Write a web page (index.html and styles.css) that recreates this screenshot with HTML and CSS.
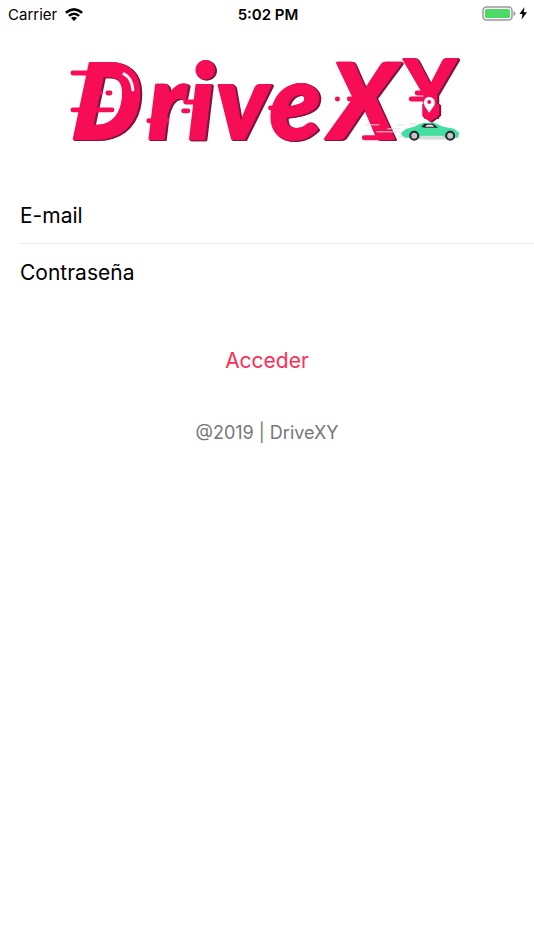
FILE: index.html
```html
<!DOCTYPE html>
<html lang="es">
<head>
<meta charset="utf-8">
<meta name="viewport" content="width=device-width, initial-scale=1">
<title>DriveXY</title>
<link rel="stylesheet" href="styles.css">
</head>
<body>
<header class="status">
  <div class="status-left">
    <span>Carrier</span>
    <svg class="wifi" viewBox="0 0 20 14" aria-hidden="true">
      <path d="M1 4.8Q10-2.6 19 4.8L17.2 6.7Q10 .8 2.8 6.7Z"/>
      <path d="M4 8Q10 3 16 8L14.2 9.8Q10 6.4 5.8 9.8Z"/>
      <path d="M7 11Q10 8.5 13 11L10 14Z"/>
    </svg>
  </div>
  <time class="clock">5:02 PM</time>
  <div class="status-right">
    <svg class="battery" viewBox="0 0 46 16" aria-hidden="true">
      <rect class="shell" x="1" y="1" width="29" height="13" rx="3.5"/>
      <rect class="charge" x="3" y="3" width="25" height="9" rx="1.5"/>
      <path class="cap" d="M31.5 5Q33.5 5.5 33.5 7.5Q33.5 9.5 31.5 10Z"/>
      <path d="M42.5 1L37.5 8H40.5L39.5 13.5L45 6.2H41.7Z"/>
    </svg>
  </div>
</header>

<main>
  <svg class="logo" viewBox="0 0 396 90" role="img" aria-label="DriveXY">
    <g class="word">
      <text class="letters" y="83"><tspan class="initial" x="2">D</tspan><tspan x="79">r</tspan><tspan x="119">i</tspan><tspan x="147">v</tspan><tspan x="201">e</tspan><tspan x="261">X</tspan></text>
      <text class="letters upright" x="362" y="61">Y</text>
      <path class="tip" d="M354 48H371V59L362 66L354 60Z"/>
    </g>
    <g class="speed">
      <path d="M4 17H20M4 54H43M20 37H31M39 37H41M80 65H98M117 46H125M115 55H119M202 52H212M269 43H269.1M281 43H290M296 82H320M343 43H356M349 37H356"/>
    </g>
    <path class="shine" d="M55 18Q63 22 64 34"/>
    <path class="pin" d="M361 41C355 41 355 48 357 51L361 57L365 51C368 48 367 41 361 41Z"/>
    <circle class="pin-dot" cx="361" cy="46" r="2"/>
    <path class="wind" d="M297 69H311M308 76H331M319 73H332M329 69H336M330 81H344M341 68H348"/>
    <ellipse class="ground" cx="365" cy="83" rx="22" ry="1"/>
    <path class="car" d="M333 77L338 73L346 71Q353 67 357 67H366L375 71L386 73L391 77L390 82H337L333 79Z"/>
    <path class="glass" d="M353 71L356 68H365L370 72L356 72Z"/>
    <path class="pane" d="M357 71L359 69H364L366 71Z"/>
    <path class="trim" d="M352 81H376"/>
    <circle class="wheel" cx="346" cy="80" r="4"/>
    <circle class="wheel" cx="382" cy="80" r="4"/>
  </svg>

  <form class="login">
    <div class="field">
      <label for="email">E-mail</label>
      <input id="email" type="email">
    </div>
    <div class="field">
      <label for="password">Contraseña</label>
      <input id="password" type="password">
    </div>
    <button type="submit">Acceder</button>
  </form>
</main>
<footer>@2019 | DriveXY</footer>
</body>
</html>
```
FILE: styles.css
```css
* { box-sizing: border-box; }
body {
  margin: 0;
  min-height: 100vh;
  background: #fff;
  color: #000;
  font-family: Inter, "Liberation Sans", sans-serif;
}
.status {
  display: grid;
  grid-template-columns: 1fr auto 1fr;
  align-items: center;
  height: 28px;
  padding: 0 6px 0 8px;
  font-size: 15px;
}
.status-left { display: flex; align-items: center; gap: 7px; }
.status-right { display: flex; justify-content: flex-end; }
.wifi { width: 20px; height: 14px; }
.battery { width: 46px; height: 16px; }
.shell { fill: none; stroke: #999; stroke-width: 1.5; }
.charge { fill: #4cd964; }
.cap { fill: #999; }
.clock { font-weight: 600; }

.logo {
  display: block;
  width: 74%;
  margin: 28px auto 0;
  overflow: visible;
}
.word { fill: #f60d55; filter: drop-shadow(1px 0 0 #7b1440) drop-shadow(1px 1px 0 #7b1440); }
.letters { font: italic 900 106px Lato, sans-serif; stroke: #f60d55; stroke-width: 2; stroke-linejoin: round; }
.initial { font-family: "Noto Sans", sans-serif; font-weight: 700; }
.upright { font-size: 80px; font-style: normal; text-anchor: middle; }
.speed { fill: none; stroke: #f60d55; stroke-width: 5; stroke-linecap: round; }
.shine { fill: none; stroke: #fff; stroke-width: 3; stroke-linecap: round; }
.pin { fill: #fff; }
.pin-dot { fill: #f60d55; }
.wind { fill: none; stroke: #ddd; stroke-width: 1; }
.ground { fill: #ddd; }
.car { fill: #43dfa0; }
.glass { fill: #272432; }
.pane { fill: #e8e8ee; }
.trim { stroke: #ddd; stroke-width: 2; }
.wheel { fill: #c8c4cc; stroke: #2b2431; stroke-width: 2; }

.login { display: flex; flex-direction: column; margin-top: 40px; }
.field {
  display: flex;
  align-items: center;
  gap: 12px;
  height: 57px;
  padding-top: 2px;
  margin-left: 20px;
  font-size: 21px;
}
.field + .field { border-top: 1px solid #ececec; }
.field input {
  flex: 1;
  min-width: 0;
  border: 0;
  outline: 0;
  background: none;
  font: inherit;
}
button {
  align-self: center;
  margin-top: 31px;
  padding: 8px 16px;
  border: 0;
  background: none;
  color: #ff2d55;
  font: inherit;
  font-size: 21px;
  line-height: 44px;
}
footer {
  margin-top: 30px;
  color: #777;
  font-size: 18px;
  line-height: 24px;
  text-align: center;
}
```
